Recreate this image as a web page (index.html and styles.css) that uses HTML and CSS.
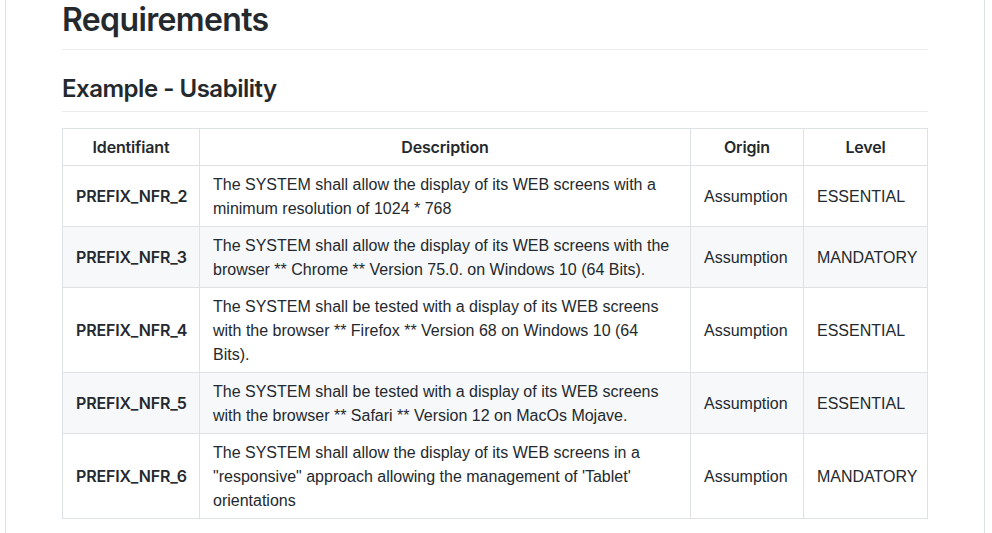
FILE: index.html
```html
<!DOCTYPE html>
<html lang="en">
<head>
<meta charset="utf-8">
<title>Requirements</title>
<link rel="stylesheet" href="styles.css">
</head>
<body>
<div class="page">
  <article class="markdown-body">
    <h1>Requirements</h1>
    <h2>Example - Usability</h2>
    <table>
      <colgroup>
        <col class="c-id">
        <col class="c-desc">
        <col class="c-origin">
        <col class="c-level">
      </colgroup>
      <thead>
        <tr><th>Identifiant</th><th>Description</th><th>Origin</th><th>Level</th></tr>
      </thead>
      <tbody>
        <tr>
          <td class="id">PREFIX_NFR_2</td>
          <td>The SYSTEM shall allow the display of its WEB screens with a minimum resolution of 1024 * 768</td>
          <td>Assumption</td>
          <td>ESSENTIAL</td>
        </tr>
        <tr>
          <td class="id">PREFIX_NFR_3</td>
          <td>The SYSTEM shall allow the display of its WEB screens with the browser ** Chrome ** Version 75.0. on Windows 10 (64 Bits).</td>
          <td>Assumption</td>
          <td>MANDATORY</td>
        </tr>
        <tr>
          <td class="id">PREFIX_NFR_4</td>
          <td>The SYSTEM shall be tested with a display of its WEB screens with the browser ** Firefox ** Version 68 on Windows 10 (64 Bits).</td>
          <td>Assumption</td>
          <td>ESSENTIAL</td>
        </tr>
        <tr>
          <td class="id">PREFIX_NFR_5</td>
          <td>The SYSTEM shall be tested with a display of its WEB screens with the browser ** Safari ** Version 12 on MacOs Mojave.</td>
          <td>Assumption</td>
          <td>ESSENTIAL</td>
        </tr>
        <tr>
          <td class="id">PREFIX_NFR_6</td>
          <td>The SYSTEM shall allow the display of its WEB screens in a "responsive" approach allowing the management of 'Tablet' orientations</td>
          <td>Assumption</td>
          <td>MANDATORY</td>
        </tr>
      </tbody>
    </table>
  </article>
</div>
</body>
</html>
```

FILE: styles.css
```css
html, body {
  margin: 0;
  padding: 0;
  background: #fff;
}

body {
  font-family: "Liberation Sans", Arial, Helvetica, sans-serif;
  font-size: 16px;
  line-height: 1.5;
  color: #24292e;
}

.page {
  margin-left: 5px;
  width: 978px;
  min-height: 533px;
  border-left: 1px solid #dfe2e5;
  border-right: 1px solid #dfe2e5;
  box-sizing: content-box;
}

.markdown-body {
  padding: 0 56px;
}

.markdown-body h1,
.markdown-body h2 {
  font-family: Inter, "Liberation Sans", Arial, sans-serif;
  font-weight: 600;
  letter-spacing: -0.02em;
  line-height: 1.25;
  border-bottom: 1px solid #eaecef;
  margin: 24px 0 16px;
}

.markdown-body h1 {
  font-size: 32px;
  margin-top: 0;
  padding-bottom: 9px;
}

.markdown-body h2 {
  font-size: 24px;
  padding-bottom: 7.2px;
}

.markdown-body table {
  border-collapse: collapse;
  border-spacing: 0;
  table-layout: fixed;
  width: 865px;
}

.c-id { width: 137px; }
.c-desc { width: 491px; }
.c-origin { width: 113px; }
.c-level { width: 124px; }

.markdown-body th,
.markdown-body td {
  border: 1px solid #dfe2e5;
  padding: 6px 13px;
}

.markdown-body td {
  text-align: left;
  padding: 7px 13px 5px;
}

.markdown-body th,
.markdown-body td.id {
  font-family: Inter, "Liberation Sans", Arial, sans-serif;
  font-weight: 600;
  letter-spacing: -0.01em;
  padding: 6px 13px;
}

.markdown-body th {
  text-align: center;
}

.markdown-body tbody tr {
  background: #fff;
}

.markdown-body tbody tr:nth-child(even) {
  background: #f6f8fa;
}
```
